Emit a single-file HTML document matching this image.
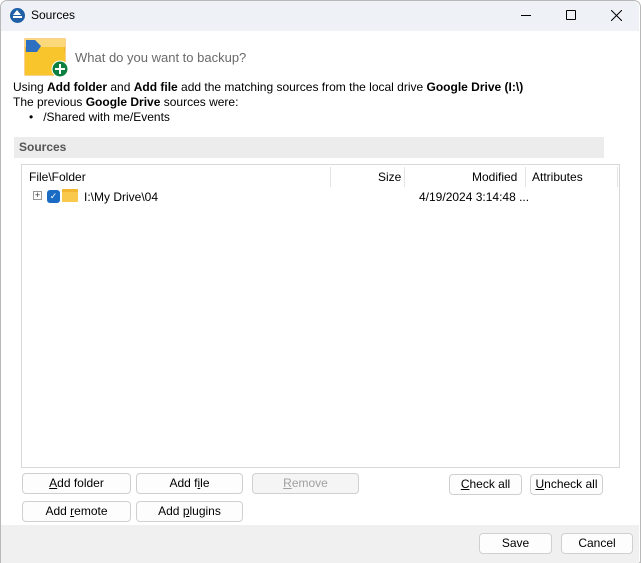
<html><head><style>
*{box-sizing:border-box}
body{margin:0;width:641px;height:563px;background:#fff;font-family:"Liberation Sans",sans-serif;font-size:12px;color:#000;position:relative;overflow:hidden}
.a{position:absolute}
.btn{position:absolute;border:1px solid #d0d0d0;border-radius:4px;background:#fdfdfd;text-align:center;line-height:19px;font-size:12px}
.btn u{text-decoration:underline}
</style></head><body>
<div class="a" style="left:0;top:0;width:641px;height:563px;border:1px solid #b8b8b8;border-radius:7px 7px 0 0"></div>
<div class="a" style="left:1px;top:1px;width:638px;height:30px;background:#eef2f7;border-radius:7px 7px 0 0"></div>
<div class="a" style="left:10px;top:8px;width:15px;height:15px;border-radius:50%;background:#1f5fa6"></div>
<div class="a" style="left:13px;top:10px;width:0;height:0;border-left:4.5px solid transparent;border-right:4.5px solid transparent;border-bottom:5px solid #fff"></div>
<div class="a" style="left:13px;top:16px;width:9px;height:2px;background:#fff"></div>
<div class="a" style="left:31px;top:8px;font-size:12px">Sources</div>
<div class="a" style="left:521px;top:15px;width:10px;height:1px;background:#000"></div>
<div class="a" style="left:566px;top:10px;width:10px;height:10px;border:1px solid #000;border-radius:1px"></div>
<svg class="a" style="left:611px;top:10px" width="11" height="11"><path d="M0 0L11 11M11 0L0 11" stroke="#000" stroke-width="1"/></svg>
<svg class="a" style="left:24px;top:36px" width="46" height="42"><rect x="1" y="3" width="40" height="36" fill="#f8c52c" stroke="#f0a020"/><rect x="1" y="3" width="40" height="8" fill="#fbd97a"/><path d="M2 4h9l6 6l-4 6h-11z" fill="#2d6fc0"/><rect x="1" y="16" width="40" height="23" fill="#f8c52c"/><circle cx="36" cy="33" r="8" fill="#0c8040" stroke="#fff" stroke-width="1"/><path d="M36 28v10M31 33h10" stroke="#fff" stroke-width="2"/></svg>
<div class="a" style="left:75px;top:50px;font-size:13px;color:#6a6a6a">What do you want to backup?</div>
<div class="a" style="left:13px;top:80px">Using <b>Add folder</b> and <b>Add file</b> add the matching sources from the local drive <b>Google Drive (I:\)</b></div>
<div class="a" style="left:13px;top:95px">The previous <b>Google Drive</b> sources were:</div>
<div class="a" style="left:29px;top:110px">•&nbsp;&nbsp;&nbsp;/Shared with me/Events</div>
<div class="a" style="left:14px;top:137px;width:590px;height:21px;background:#ececec;color:#555;font-weight:bold;padding:3px 0 0 5px">Sources</div>
<div class="a" style="left:21px;top:164px;width:599px;height:304px;border:1px solid #d8d8d8"></div>
<div class="a" style="left:29px;top:170px">File\Folder</div>
<div class="a" style="left:330px;top:167px;width:1px;height:20px;background:#e4e4e4"></div>
<div class="a" style="left:378px;top:170px">Size</div>
<div class="a" style="left:404px;top:167px;width:1px;height:20px;background:#e4e4e4"></div>
<div class="a" style="left:472px;top:170px">Modified</div>
<div class="a" style="left:525px;top:167px;width:1px;height:20px;background:#e4e4e4"></div>
<div class="a" style="left:532px;top:170px">Attributes</div>
<div class="a" style="left:617px;top:167px;width:1px;height:20px;background:#e4e4e4"></div>
<div class="a" style="left:33px;top:191px;width:9px;height:9px;border:1px solid #999;font-size:9px;line-height:7px;text-align:center;color:#333">+</div>
<div class="a" style="left:47px;top:190px;width:13px;height:13px;border-radius:3px;background:#1a6bc4;color:#fff;font-size:9px;line-height:13px;text-align:center">✓</div>
<div class="a" style="left:62px;top:189px;width:16px;height:13px;background:#f8c94a;border-radius:1px;border-top:3px solid #f2b630"></div>
<div class="a" style="left:84px;top:190px">I:\My Drive\04</div>
<div class="a" style="left:419px;top:190px">4/19/2024 3:14:48 ...</div>
<div class="btn" style="left:22px;top:473px;width:109px;height:21px"><u>A</u>dd folder</div>
<div class="btn" style="left:136px;top:473px;width:107px;height:21px">Add f<u>i</u>le</div>
<div class="btn" style="left:252px;top:473px;width:107px;height:21px;color:#a0a0a0;background:#f5f5f5"><u>R</u>emove</div>
<div class="btn" style="left:449px;top:474px;width:73px;height:21px"><u>C</u>heck all</div>
<div class="btn" style="left:530px;top:474px;width:73px;height:21px"><u>U</u>ncheck all</div>
<div class="btn" style="left:22px;top:501px;width:109px;height:21px">Add <u>r</u>emote</div>
<div class="btn" style="left:136px;top:501px;width:107px;height:21px">Add <u>p</u>lugins</div>
<div class="a" style="left:1px;top:525px;width:638px;height:38px;background:#f0f0f0"></div>
<div class="btn" style="left:479px;top:533px;width:73px;height:21px">Save</div>
<div class="btn" style="left:561px;top:533px;width:72px;height:21px">Cancel</div>
</body></html>
